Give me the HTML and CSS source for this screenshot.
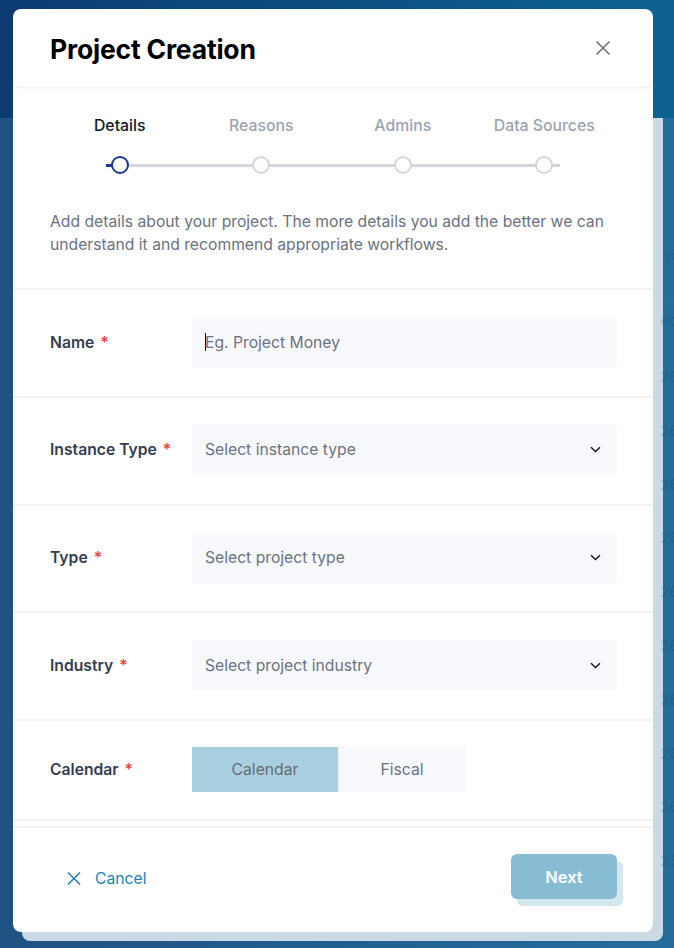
FILE: index.html
```html
<!DOCTYPE html>
<html lang="en">
<head>
    <meta charset="UTF-8">
    <meta name="viewport" content="width=device-width, initial-scale=1.0">
    <title>Project Creation</title>
    <link rel="stylesheet" href="styles.css">
</head>
<body>
    <!-- page behind the dialog -->
    <div class="page">
        <div class="topbar"></div>
        <div class="page-body">
            <div class="col">
                <div class="search">c</div>
                <div class="col-head">ed</div>
                <div class="cell">26</div>
                <div class="cell">26</div>
                <div class="cell">26</div>
                <div class="cell">26</div>
                <div class="cell">26</div>
                <div class="cell">26</div>
                <div class="cell">26</div>
                <div class="cell">26</div>
                <div class="cell">26</div>
                <div class="cell">23</div>
            </div>
        </div>
    </div>

    <div class="modal">
        <div class="modal-header">
            <h1>Project Creation</h1>
            <button class="close" aria-label="Close">
                <svg width="16" height="16" viewBox="0 0 16 16"><path d="M1.5 1.5l13 13M14.5 1.5l-13 13" stroke="#6b7280" stroke-width="1.6" fill="none"/></svg>
            </button>
        </div>

        <div class="stepper">
            <div class="steps">
                <div class="step active">Details</div>
                <div class="step">Reasons</div>
                <div class="step">Admins</div>
                <div class="step">Data Sources</div>
            </div>
            <div class="track">
                <span class="dot active"></span>
                <span class="dot"></span>
                <span class="dot"></span>
                <span class="dot"></span>
            </div>
        </div>

        <p class="intro">Add details about your project. The more details you add the better we can understand it and recommend appropriate workflows.</p>

        <div class="row">
            <label>Name <span class="req">*</span></label>
            <div class="field">
                <span class="caret"></span>
                <span class="placeholder">Eg. Project Money</span>
            </div>
        </div>
        <div class="row">
            <label>Instance Type <span class="req">*</span></label>
            <div class="field select">
                <span class="placeholder">Select instance type</span>
                <svg width="11" height="7" viewBox="0 0 11 7"><path d="M1 1.2l4.5 4.3L10 1.2" stroke="#111" stroke-width="1.3" fill="none"/></svg>
            </div>
        </div>
        <div class="row">
            <label>Type <span class="req">*</span></label>
            <div class="field select">
                <span class="placeholder">Select project type</span>
                <svg width="11" height="7" viewBox="0 0 11 7"><path d="M1 1.2l4.5 4.3L10 1.2" stroke="#111" stroke-width="1.3" fill="none"/></svg>
            </div>
        </div>
        <div class="row">
            <label>Industry <span class="req">*</span></label>
            <div class="field select">
                <span class="placeholder">Select project industry</span>
                <svg width="11" height="7" viewBox="0 0 11 7"><path d="M1 1.2l4.5 4.3L10 1.2" stroke="#111" stroke-width="1.3" fill="none"/></svg>
            </div>
        </div>
        <div class="row last">
            <label>Calendar <span class="req">*</span></label>
            <div class="toggle">
                <button class="opt on">Calendar</button>
                <button class="opt">Fiscal</button>
            </div>
        </div>

        <div class="modal-footer">
            <button class="cancel">
                <svg width="14" height="13" viewBox="0 0 14 13"><path d="M1 0.5l12 12M13 0.5l-12 12" stroke="#1b84b1" stroke-width="1.5" fill="none"/></svg>
                Cancel
            </button>
            <button class="next">Next</button>
        </div>
    </div>
</body>
</html>
```

FILE: styles.css
```css
* {
    box-sizing: border-box;
}
body {
    font-family: Inter, "Noto Sans", sans-serif;
    margin: 0;
    height: 948px;
    overflow: hidden;
    background: linear-gradient(90deg, #1f5283, #246d9b);
}
button {
    font-family: inherit;
    border: none;
    background: none;
    cursor: pointer;
}

/* background page */
.topbar {
    height: 118px;
    background: linear-gradient(90deg, #0b3b70, #0d6294);
}
.page-body {
    padding-left: 660px;
}
.col {
    width: 14px;
    overflow: hidden;
    white-space: nowrap;
    padding-top: 128px;
    color: rgba(12, 45, 85, 0.16);
    font-size: 15px;
    font-weight: 600;
}
.search {
    height: 56px;
    line-height: 20px;
    padding-left: 6px;
}
.col-head {
    height: 48px;
    line-height: 36px;
    border-top: 1px solid rgba(255, 255, 255, 0.05);
}
.cell {
    height: 53.8px;
    line-height: 54px;
}

/* dialog */
.modal {
    position: absolute;
    left: 13px;
    top: 9px;
    width: 640px;
    height: 923px;
    background: white;
    border-radius: 8px;
}
.modal::before {
    content: "";
    position: absolute;
    left: 9px;
    top: 9px;
    right: -10px;
    bottom: -9px;
    background: #cbd9e4;
    border-radius: 8px;
    z-index: -1;
}
.modal-header {
    height: 78px;
    display: flex;
    align-items: center;
    justify-content: space-between;
    padding: 0 42px 0 37px;
    border-radius: 8px;
    box-shadow: 0 1px 2px rgba(0, 0, 0, 0.08);
}
.modal-header h1 {
    margin: 0 0 -1px;
    font-size: 26.5px;
    font-weight: 700;
    color: #000;
    letter-spacing: -0.2px;
}
.close {
    padding: 0;
    display: flex;
}

.stepper {
    padding: 29px 36px 0 36px;
}
.steps, .track {
    display: grid;
    grid-template-columns: repeat(4, 141.5px);
}
.step {
    text-align: center;
    font-size: 15.8px;
    line-height: 20px;
    font-weight: 500;
    color: #9ca3af;
}
.step.active {
    color: #111827;
}
.track {
    position: relative;
    margin-top: 20px;
    height: 18px;
}
.track::before {
    content: "";
    position: absolute;
    left: 57px;
    right: 57px;
    top: 7.5px;
    height: 3px;
    background: #d3d6dd;
}
.track::after {
    content: "";
    position: absolute;
    left: 57px;
    width: 8px;
    top: 7.5px;
    height: 3px;
    background: #1e3a8a;
}
.dot {
    position: relative;
    z-index: 1;
    justify-self: center;
    width: 18px;
    height: 18px;
    border-radius: 50%;
    border: 2px solid #d3d6dd;
    background: white;
}
.dot.active {
    border-color: #1e3a8a;
}

.intro {
    margin: 36px 0 0;
    padding: 0 30px 32px 37px;
    font-size: 15.7px;
    line-height: 23px;
    color: #6b7280;
}

.row {
    display: grid;
    grid-template-columns: 142px 425px;
    align-items: center;
    padding: 27px 36px 28.75px 37px;
    border-top: 2px solid #f1f2f4;
}
.row.last {
    padding-top: 26px;
    padding-bottom: 27px;
    border-bottom: 2px solid #f1f2f4;
}
.row label {
    font-size: 15.7px;
    font-weight: 600;
    color: #343d4e;
}
.req {
    color: #ef4444;
    margin-left: 2px;
}
.field {
    position: relative;
    height: 50px;
    background: #f8f9fc;
    display: flex;
    align-items: center;
    justify-content: space-between;
    padding: 0 16px 0 13px;
    font-size: 15.7px;
}
.placeholder {
    color: #6b7280;
}
.caret {
    position: absolute;
    left: 13px;
    top: 16px;
    height: 18px;
    border-left: 1px solid #111;
}

.toggle {
    display: flex;
}
.opt {
    height: 45px;
    font-size: 15.7px;
    color: #6b7280;
    background: #f8f9fc;
    width: 128px;
}
.opt.on {
    width: 146px;
    background: #a9d0e1;
    color: #666b73;
}

.modal-footer {
    margin-top: 5px;
    border-top: 2px solid #f1f2f4;
    display: flex;
    align-items: center;
    justify-content: space-between;
    padding: 26px 36px 0 54px;
}
.cancel {
    display: flex;
    align-items: center;
    gap: 14px;
    font-size: 15.7px;
    color: #1b84b1;
    padding: 0;
    margin-top: 3px;
}
.next {
    position: relative;
    width: 106px;
    height: 45px;
    border-radius: 6px;
    background: #88bcd4;
    color: white;
    font-size: 16.5px;
    font-weight: 600;
    box-shadow: 6px 7px 0 #d3e7ef;
}
```
